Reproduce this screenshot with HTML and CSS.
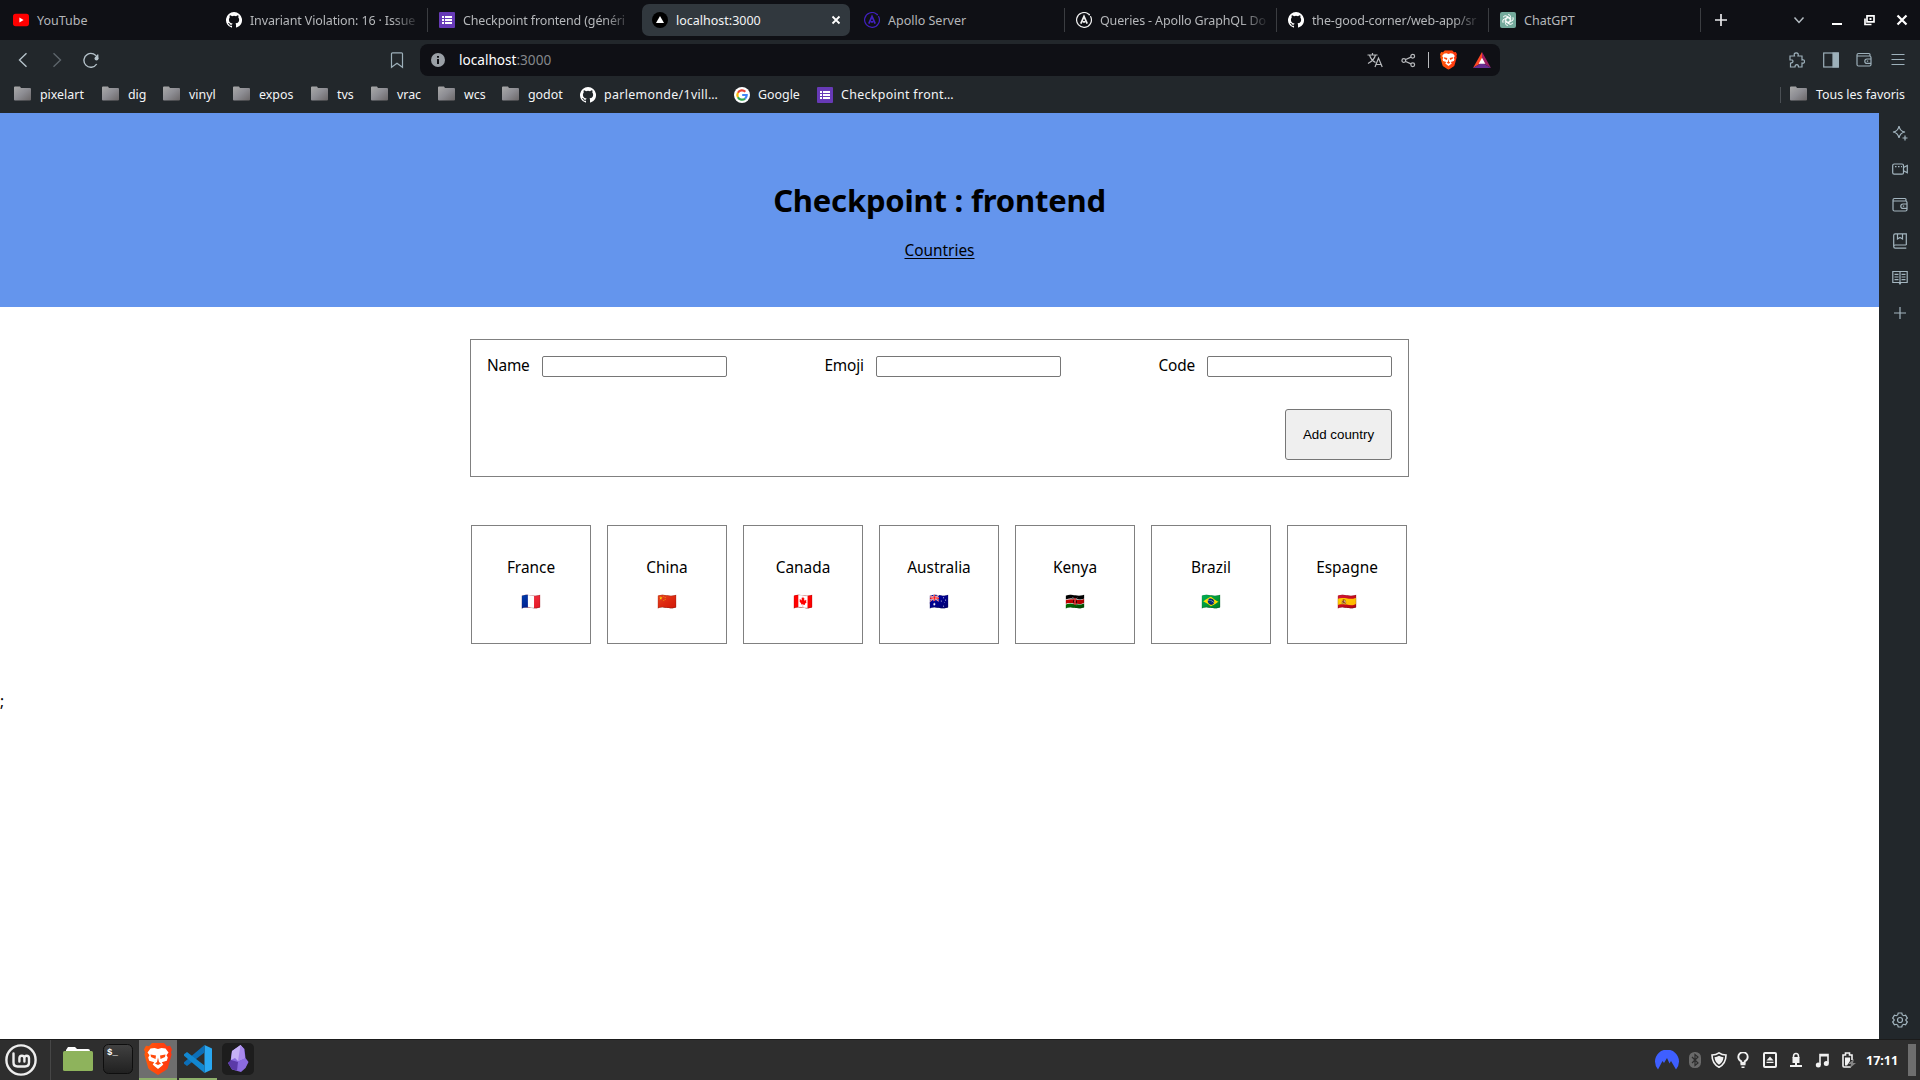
FILE: index.html
```html
<!DOCTYPE html>
<html lang="fr">
<head>
<meta charset="utf-8">
<title>localhost:3000</title>
<link rel="stylesheet" href="styles.css">
</head>
<body>
<svg class="defs" width="0" height="0">
  <symbol id="github" viewBox="0 0 16 16"><path fill="#fff" d="M8 0a8 8 0 0 0-2.53 15.59c.4.07.55-.17.55-.38v-1.49c-2.01.37-2.53-.49-2.69-.94-.09-.23-.48-.94-.82-1.13-.28-.15-.68-.52-.01-.53.63-.01 1.08.58 1.23.82.72 1.21 1.87.87 2.33.66.07-.52.28-.87.51-1.07-1.78-.2-3.64-.89-3.64-3.95 0-.87.31-1.59.82-2.15-.08-.2-.36-1.02.08-2.12 0 0 .67-.21 2.2.82a7.4 7.4 0 0 1 4 0c1.53-1.04 2.2-.82 2.2-.82.44 1.1.16 1.92.08 2.12.51.56.82 1.27.82 2.15 0 3.07-1.87 3.75-3.65 3.95.29.25.54.73.54 1.48v2.2c0 .21.15.46.55.38A8 8 0 0 0 8 0z"/></symbol>
  <symbol id="forms" viewBox="0 0 16 16"><rect width="16" height="16" rx="1" fill="#673ab7"/><path fill="#fff" d="M3 4h2v2H3zM6 4h7v2H6zM3 7h2v2H3zM6 7h7v2H6zM3 10h2v2H3zM6 10h7v2H6z"/></symbol>
  <symbol id="apollo" viewBox="0 0 16 16"><path fill="none" stroke="currentColor" stroke-width="1.2" stroke-linecap="round" d="M14.6 4.6A7.4 7.4 0 1 1 12.4 2"/><circle cx="13.2" cy="2.6" r=".9" fill="currentColor"/><path fill="none" stroke="currentColor" stroke-width="1.7" d="M4.8 11.7 8 4.3l3.2 7.4M6.8 9.8h2.4"/></symbol>
  <symbol id="folder" viewBox="0 0 17 15"><path fill="url(#fg)" d="M0 1.5Q0 .5 1 .5h5l1 1.5h9q1 0 1 1v10.500q0 1-1 1H1q-1 0-1-1z"/></symbol>
  <linearGradient id="fg" x1="0" y1="0" x2="1" y2="1"><stop offset="0" stop-color="#aaa"/><stop offset=".5" stop-color="#8d8d93"/><stop offset="1" stop-color="#6b6768"/></linearGradient>
  <linearGradient id="bg" x1="0" x2="1"><stop offset="0" stop-color="#ff5a0a"/><stop offset="1" stop-color="#ff3410"/></linearGradient>
  <symbol id="brave" viewBox="0 0 28 32"><path fill="url(#bg)" d="M8 0h12l3 3.300 3-.5 2 3.700-1 2.800.6 2.200-3.800 13.600Q23 27 14 32 5 27 4.200 25.100L.4 11.500 1 9.300 0 6.500l2-3.700 3 .5z"/><path fill="#fff" d="m14 6 3.500-1 4 .6 3 4-2 2.600 1.300 2.400-1 3.200-5 1.500 1.500 2.300-1.600 1.400L14 26l-3.700-3-1.600-1.400 1.500-2.300-5-1.500-1-3.200 1.300-2.400-2-2.600 3-4 4-.6z"/><path fill="#ff4a0d" d="m6.500 11.500 5.500 1-.5 3.500-4.500-2zM21.500 11.500l-5.500 1 .5 3.500 4.500-2zM14 14.500l1 4.500 2 1.500-3 1.500-3-1.500L13 19z"/></symbol>
  <symbol id="wallet" viewBox="0 0 16 16"><g fill="none" stroke="currentColor" stroke-width="1.2"><path d="M1 4.500V3q0-1.500 1.500-1.500H13q1 0 1 1v2M1 4h12.500q1.500 0 1.500 1.500v7q0 1.500-1.500 1.500h-11Q1 14 1 12.500V4"/><path d="M15 7h-4a2.200 2.200 0 0 0 0 4.400h4M10.800 9.200h1.400"/></g></symbol>
</svg>

<div class="desktop">
  <div class="tabs">
    <div class="tab"><svg class="i16" viewBox="0 0 16 16"><rect y="1.800" width="16" height="12.400" rx="2.600" fill="#f00"/><path d="m6.400 5.600 4.200 2.400-4.200 2.400z" fill="#fff"/></svg><span>YouTube</span></div>
    <div class="tab"><svg class="i16"><use href="#github"/></svg><span class="fade">Invariant Violation: 16 · Issue</span></div>
    <div class="tab sep"><svg class="i16"><use href="#forms"/></svg><span class="fade">Checkpoint frontend (généri</span></div>
    <div class="tab active"><svg class="i16" viewBox="0 0 16 16"><circle cx="8" cy="8" r="8" fill="#000"/><path d="m8 4 4 7H4z" fill="#fff"/></svg><span>localhost:3000</span><svg class="close" viewBox="0 0 10 10"><path d="m1.500 1.500 7 7m0-7-7 7" stroke="#fff" stroke-width="1.800"/></svg></div>
    <div class="tab violet"><svg class="i16"><use href="#apollo"/></svg><span>Apollo Server</span></div>
    <div class="tab sep light"><svg class="i16"><use href="#apollo"/></svg><span class="fade">Queries - Apollo GraphQL Do</span></div>
    <div class="tab sep"><svg class="i16"><use href="#github"/></svg><span class="fade">the-good-corner/web-app/sr</span></div>
    <div class="tab sep"><svg class="i16" viewBox="0 0 16 16"><rect width="16" height="16" rx="2" fill="#74aa9c"/><g fill="none" stroke="#fff" stroke-width=".9"><path id="petal" d="M8 2.500a2.700 2.700 0 0 1 2.700 2.700v3.600L8 10.300"/><use href="#petal" transform="rotate(60 8 8)"/><use href="#petal" transform="rotate(120 8 8)"/><use href="#petal" transform="rotate(180 8 8)"/><use href="#petal" transform="rotate(240 8 8)"/><use href="#petal" transform="rotate(300 8 8)"/></g></svg><span>ChatGPT</span></div>
    <div class="newtab sep"><svg width="12" height="12" viewBox="0 0 12 12"><path d="M6 0v12M0 6h12" stroke="#e8e8ea" stroke-width="1.700"/></svg></div>
    <div class="window">
      <svg viewBox="0 0 12 12"><path d="m1.500 3.500 4.500 5 4.500-5" fill="none" stroke="#b4bcc2" stroke-width="1.500"/></svg>
      <svg viewBox="0 0 12 12"><path d="M1 10h10" stroke="#fff" stroke-width="2"/></svg>
      <svg viewBox="0 0 12 12"><path d="M4 1.800h7v6H4zM2 4.500v6h6.500" fill="none" stroke="#fff" stroke-width="1.700"/><path d="M6.500 4h2v2h-2z" fill="#fff"/></svg>
      <svg viewBox="0 0 12 12"><path d="m1.500 1.500 9 9m0-9-9 9" stroke="#fff" stroke-width="2.200"/></svg>
    </div>
  </div>

  <div class="toolbar">
    <div class="nav">
      <svg viewBox="0 0 16 16"><path d="M11.500 1.200 4.500 8l7 6.800"/></svg>
      <svg class="dim" viewBox="0 0 16 16"><path d="m4.500 1.200 7 6.800-7 6.800"/></svg>
      <svg viewBox="0 0 16 16"><path d="M14.500 6.500A6.900 6.900 0 1 0 13.700 12M14.700 2.500v4.200"/><circle cx="13.500" cy="6.500" r="2" class="dot"/></svg>
    </div>
    <svg class="mark" viewBox="0 0 16 16"><path d="M3.500.8h9q1 0 1 1v13.400L8 11.200l-5.500 4V1.800q0-1 1-1z"/></svg>
    <div class="url">
      <svg class="info" viewBox="0 0 14 14"><circle cx="7" cy="7" r="7" fill="#9aa0a6"/><path d="M6 3h2v1.700H6zM6 6h2v5H6z" fill="#0f1015"/></svg>
      <span class="address">localhost<i>:3000</i></span>
      <svg class="i16" viewBox="0 0 16 16"><path fill="none" stroke="#b9bbbe" stroke-width="1.200" d="M.5 3h10M5.500 1v2M2.500 3q1.500 5 6 7.500M8.500 3Q7 8.500 1 11.500M8 15l3.500-9 3.700 9M9 12.500h5"/></svg>
      <svg class="share" viewBox="0 0 16 16"><g fill="none" stroke="#b9bbbe" stroke-width="1.300"><circle cx="3" cy="8" r="2"/><circle cx="12.500" cy="3.500" r="2"/><circle cx="12.500" cy="12.500" r="2"/><path d="m5 7 5.600-2.600M5 9l5.600 2.600"/></g></svg>
      <b class="bar"></b>
      <svg class="lion" viewBox="0 0 28 32"><use href="#brave"/></svg>
      <svg class="bat" viewBox="0 0 18 16"><path d="M9 0 0 16l9-5.500z" fill="#ff4724"/><path d="m9 0 9 16-9-5.500z" fill="#9e1f63"/><path d="M0 16h18l-9-5.500z" fill="#662d91"/><path d="m9 5.800 3.300 6H5.700z" fill="#fff"/></svg>
    </div>
    <div class="tools">
      <svg viewBox="0 0 16 16"><path d="M1 4h4.500q-1-3.200 1.700-3.200T9 4h4v4q2.500-.6 2.500 1.500T13 11v4H9.500q0-2.300-1.700-2.300T6 15H1.500v-4Q4 11 4 9.300T1 7.800z"/></svg>
      <svg viewBox="0 0 16 16"><rect x=".7" y="1" width="14.600" height="14"/><path d="M10 1h5.300v14H10z" class="fill"/></svg>
      <svg viewBox="0 0 16 16"><use href="#wallet"/></svg>
      <svg viewBox="0 0 16 16"><path d="M1.500 2.500h13M1.500 7.500h13M1.500 12.500h13"/></svg>
    </div>
  </div>

  <div class="bookmarks">
    <div class="bm"><svg class="fold"><use href="#folder"/></svg>pixelart</div>
    <div class="bm"><svg class="fold"><use href="#folder"/></svg>dig</div>
    <div class="bm"><svg class="fold"><use href="#folder"/></svg>vinyl</div>
    <div class="bm"><svg class="fold"><use href="#folder"/></svg>expos</div>
    <div class="bm"><svg class="fold"><use href="#folder"/></svg>tvs</div>
    <div class="bm"><svg class="fold"><use href="#folder"/></svg>vrac</div>
    <div class="bm"><svg class="fold"><use href="#folder"/></svg>wcs</div>
    <div class="bm"><svg class="fold"><use href="#folder"/></svg>godot</div>
    <div class="bm site wide"><svg class="i16"><use href="#github"/></svg>parlemonde/1vill…</div>
    <div class="bm site"><svg class="i16" viewBox="0 0 16 16"><circle cx="8" cy="8" r="8" fill="#fff"/><g fill="none" stroke-width="2.200"><path stroke="#ea4335" d="M3.900 5.800A4.700 4.700 0 0 1 11.300 4.700"/><path stroke="#fbbc05" d="M3.900 10.200a4.700 4.700 0 0 1 0-4.400"/><path stroke="#34a853" d="M3.900 10.200a4.700 4.700 0 0 0 7.200 1.400"/><path stroke="#4285f4" d="M11.100 11.600A4.600 4.600 0 0 0 12.700 8H8.200"/></g></svg>Google</div>
    <div class="bm site wide"><svg class="i16"><use href="#forms"/></svg>Checkpoint front…</div>
    <div class="bm all"><svg class="fold"><use href="#folder"/></svg>Tous les favoris</div>
  </div>

  <div class="body">
    <main class="page">
      <header class="banner">
        <h1>Checkpoint : frontend</h1>
        <a class="link">Countries</a>
      </header>
      <form class="form">
        <div class="fields">
          <label><span>Name</span><input type="text"></label>
          <label><span>Emoji</span><input type="text"></label>
          <label><span>Code</span><input type="text"></label>
        </div>
        <button type="button" class="add">Add country</button>
      </form>
      <section class="cards">
        <div class="card"><span>France</span><span class="flag">🇫🇷</span></div>
        <div class="card"><span>China</span><span class="flag">🇨🇳</span></div>
        <div class="card"><span>Canada</span><span class="flag">🇨🇦</span></div>
        <div class="card"><span>Australia</span><span class="flag">🇦🇺</span></div>
        <div class="card"><span>Kenya</span><span class="flag">🇰🇪</span></div>
        <div class="card"><span>Brazil</span><span class="flag">🇧🇷</span></div>
        <div class="card"><span>Espagne</span><span class="flag">🇪🇸</span></div>
      </section>
      <div class="stray">;</div>
    </main>
    <aside class="side">
      <svg viewBox="0 0 16 16"><path d="M7 1q1 5.500 6 6-5 .8-6 6-1-5.200-6-6 5-.5 6-6z"/><path d="M13 10.500v5M10.500 13h5"/></svg>
      <svg viewBox="0 0 16 16"><rect x=".7" y="3" width="10.800" height="10.200" rx="1.500"/><path d="m11.500 6.500 3.800-2v7.200l-3.800-2M3 5.700h1.500M6 5.700h1.500M9 5.700h1"/></svg>
      <svg viewBox="0 0 16 16"><use href="#wallet"/></svg>
      <svg viewBox="0 0 16 16"><path d="M14.300 12V.9H3.200q-1.500 0-1.500 1.500v11q0 1.700 1.500 1.700h11.100M14.300 12H3.200q-1.500 0-1.500 1.400M5.500 1v5L8 4.500 10.500 6V1"/></svg>
      <svg viewBox="0 0 16 16"><path d="M8 2.500H.8v11H7l1 1.500 1-1.500h6.200v-11zM8 2.500V15M2.500 5.300h4M2.500 8h4M2.500 10.700h4M9.500 5.300h4M9.500 8h4M9.500 10.700h4"/></svg>
      <svg viewBox="0 0 16 16"><path d="M8 2v12M2 8h12"/></svg>
      <svg class="gear" viewBox="0 0 16 16"><path d="m6.200 1 3.600 0 .5 1.900 1.400.8 1.900-.6 1.700 3-1.400 1.400v1l1.400 1.400-1.700 3-1.900-.6-1.400.8-.5 1.900H6.200l-.5-1.900-1.400-.8-1.900.6-1.700-3 1.400-1.400v-1L.7 6.100l1.700-3 1.900.6 1.400-.8z"/><circle cx="8" cy="8" r="2.500"/></svg>
    </aside>
  </div>

  <footer class="taskbar">
    <div class="start"><svg width="32" height="32" viewBox="0 0 32 32"><g fill="none" stroke="#eee" stroke-width="2.400"><circle cx="16" cy="16" r="14.600"/><path stroke-linecap="round" d="M8.500 9.500v9q0 4 4 4h7.500q4 0 4-4v-4.200q0-2.600-2.300-2.600t-2.300 2.600v3.200M19.400 14.300q0-2.600-2.500-2.600t-2.500 2.600v3.200"/></g></svg></div>
    <div class="app"><svg width="30" height="26" viewBox="0 0 30 26"><path d="M3 6V4l2-3h7l2 2h11q2 0 2 2v2z" fill="#fff"/><rect y="5" width="30" height="20" rx="1.500" fill="#8eb35c"/></svg></div>
    <div class="app"><svg width="30" height="30" viewBox="0 0 30 30"><defs><linearGradient id="tg" x2="0" y2="1"><stop stop-color="#414141"/><stop offset="1" stop-color="#202020"/></linearGradient></defs><rect x=".5" y=".5" width="29" height="29" rx="5" fill="url(#tg)" stroke="#0e0e0e"/><text x="4" y="10.500" class="prompt">$_</text></svg></div>
    <div class="app open lit"><svg width="28" height="32" viewBox="0 0 28 32"><use href="#brave"/></svg></div>
    <div class="app open"><svg width="28" height="28" viewBox="0 0 28 28"><path d="M20.500 0 28 3.500v21L20.500 28z" fill="#29a8f2"/><path d="M20.500 0v7.500L3 21 0 18.800v-1.500z" fill="#0c6fb8"/><path d="M20.500 28v-7.500L3 7 0 9.200v1.500z" fill="#1287d0"/></svg></div>
    <div class="app"><svg width="32" height="32" viewBox="0 0 32 32"><rect width="32" height="32" rx="5" fill="#1d1d1d"/><path d="M18.500 2 10 8 8.500 18 6 20l4 6.500 9 2.500 4.500-4 3-6-3-4-1-9z" fill="#8b6be0"/><path d="M18.500 2 10 8 9 17l4-2 3 3 6.500-3-1-9z" fill="#c7b2f7"/><path d="M18.500 2 16 18l7-3-1.300-9z" fill="#a889ec"/><path d="m6 20 3-3 7 2-1 8.500-5-1z" fill="#5b3aa8"/></svg></div>
    <div class="tray">
      <svg viewBox="0 0 24 20"><path d="M3 19.500A12 12 0 1 1 21 19.500L16 11l-1.500 2.500L12 8l-3 5-1.500-2z" fill="#3e5fff"/></svg>
      <svg viewBox="0 0 12 16"><rect width="12" height="16" rx="5.500" fill="#6a6a6a"/><path d="m3 5 6 6-3 2.500v-11L9 5l-6 6" fill="none" stroke="#2d2d2d" stroke-width="1.200"/></svg>
      <svg viewBox="0 0 16 16"><path d="M8 .8Q11 3 15 3q0 8.500-7 12.300Q1 11.500 1 3q4 0 7-2.200z" fill="none" stroke="#f2f2f2" stroke-width="1.600"/><path d="M8 3.700q2 1.200 4.500 1.500-.5 5-4.500 7.500-4-2.500-4.500-7.500Q6 4.900 8 3.700z" fill="#f2f2f2"/></svg>
      <svg viewBox="0 0 12 16"><path d="M4.300 11V9.300q-3-1.500-3-4.300a4.700 4.700 0 0 1 9.400 0q0 2.800-3 4.300V11z" fill="none" stroke="#f2f2f2" stroke-width="1.900"/><path d="M3.500 12h5v1.200h-5zM4.500 14.500h3v1.500h-3z" fill="#f2f2f2"/></svg>
      <svg viewBox="0 0 14 16"><rect x="1" y="1" width="12" height="14" rx="1" fill="none" stroke="#f2f2f2" stroke-width="2"/><path d="m7 4.500 3.500 4h-7zM3.500 9.700h7v1.300h-7z" fill="#f2f2f2"/></svg>
      <svg viewBox="0 0 12 16"><path d="M3.500 6V4.500Q3.500 1.500 6 1.500t2.500 3V6" fill="none" stroke="#f2f2f2" stroke-width="1.500"/><path d="M2.500 5h7v6h-7zM5 11h2v2h5v2H0v-2h5z" fill="#f2f2f2"/></svg>
      <svg viewBox="0 0 14 16"><path d="M5 13V2.500h8V11" fill="none" stroke="#f2f2f2" stroke-width="1.600"/><path d="M5 2h8v2.500H5z" fill="#f2f2f2"/><circle cx="3.300" cy="13" r="2.500" fill="#f2f2f2"/><circle cx="11.300" cy="11.500" r="2.500" fill="#f2f2f2"/></svg>
      <svg viewBox="0 0 14 16"><path d="M9 15H2q-1 0-1-1V3h2.500V1h4v2H10v5" fill="none" stroke="#f2f2f2" stroke-width="1.600"/><path d="M3 10V5.500h5V9l-3 4.500H3z" fill="#f2f2f2"/><path d="m12 7-6 5h3l-1 4 6-5h-3z" fill="#858585"/></svg>
      <span class="clock">17:11</span>
      <b class="corner"></b>
    </div>
  </footer>
</div>
</body>
</html>
```
FILE: styles.css
```css
* { box-sizing: border-box; }
body { margin: 0; font-family: "Noto Sans", "Noto Color Emoji", sans-serif; color: #000; background: #fff; }
svg { display: block; flex: none; }
.defs { position: absolute; }
.i16 { width: 16px; height: 16px; }
.desktop { width: 1920px; height: 1080px; display: flex; flex-direction: column; overflow: hidden; }

.tabs { height: 40px; padding-left: 1px; background: #0f1015; display: grid; grid-template-columns: repeat(3, 213px) repeat(5, 212px) 80px 1fr; align-items: center; font-size: 12.500px; color: #b5b7ba; }
.tab { height: 32px; padding: 0 8px 0 12px; display: flex; align-items: center; gap: 8px; min-width: 0; }
.tab span { flex: 1; min-width: 0; white-space: nowrap; line-height: 20px; padding-top: 1px; }
.tab .fade { letter-spacing: -.14px; mask-image: linear-gradient(90deg, #000 84%, transparent 101%); }
.sep { background: linear-gradient(#3b3d41, #3b3d41) 0 50% / 1px 24px no-repeat; }
.active { background: #31383e; color: #f3f4f5; border-radius: 7px; margin: 0 2px; padding: 0 9px 0 10px; }
.close { width: 10px; height: 10px; }
.violet svg { color: #4121bd; }
.light svg { color: #f0f0f0; }
.newtab { height: 32px; padding-left: 15px; display: flex; align-items: center; }
.window { display: grid; grid-template-columns: 38px 32px 33px 12px; padding-left: 13px; }
.window svg { width: 12px; height: 12px; }

.toolbar { height: 40px; background: #22272b; display: flex; align-items: center; color: #9db0ba; }
.toolbar svg, .side svg { fill: none; stroke: currentColor; stroke-width: 1.200; }
.nav { width: 389px; padding-left: 15px; display: flex; gap: 18px; }
.nav svg, .mark { width: 16px; height: 18px; }
.nav svg { stroke: #b5c2ca; stroke-width: 1.400; }
.nav .dim { stroke: #5d656b; }
.nav .dot { fill: #b5c2ca; stroke: none; }
.url { width: 1080px; height: 32px; margin-left: 15px; background: #0f1015; border-radius: 8px; padding: 0 9px 0 11px; display: flex; align-items: center; }
.toolbar .url svg { stroke: none; }
.url .info { width: 14px; height: 14px; }
.address { flex: 1; margin-left: 14px; font-size: 13.600px; line-height: 20px; color: #fff; }
.address i { font-style: normal; color: #85888c; }
.url .share { width: 15px; height: 15px; margin-left: 18px; }
.bar { width: 1px; height: 16px; background: #b9bbbe; margin: 0 11px 0 12px; }
.url .lion { width: 17px; height: 20px; margin-right: 16px; }
.url .bat { width: 18px; height: 16px; }
.tools { display: flex; gap: 17.600px; margin-left: 289px; }
.tools svg { width: 16px; height: 16px; }
.tools .fill { fill: #9db0ba; }

.bookmarks { height: 33px; background: #22272b; padding: 0 14px 4px; display: grid; grid-template-columns: 88px 61px 70px 78px 60px 67px 64px 78px 154px 83px 1fr 140px; align-items: center; font-size: 12.400px; color: #f4f5f6; }
.bm { display: flex; align-items: center; gap: 9px; white-space: nowrap; line-height: 20px; }
.bm.site { gap: 8px; }
.bm.wide { letter-spacing: .33px; }
.fold { width: 17px; height: 15px; margin-bottom: 2px; }
.all { height: 16px; border-left: 1px solid #4a4f54; padding-left: 9px; margin-left: 14px; }

.body { flex: 1; min-height: 0; display: flex; }
.page { width: 1879px; background: #fff; font-size: 15.400px; line-height: 20px; display: flex; flex-direction: column; align-items: center; }
.banner { width: 100%; height: 194px; background: #6495ed; padding-top: 67px; display: flex; flex-direction: column; align-items: center; gap: 19px; }
.banner h1 { margin: 0; font-size: 31px; line-height: 40px; letter-spacing: -.2px; }
.link { line-height: 24px; text-decoration: underline; text-decoration-thickness: 1px; text-underline-offset: 2px; }
.form { width: 939px; height: 138px; margin-top: 32px; border: 1px solid #808080; padding: 16px; display: flex; flex-direction: column; justify-content: space-between; }
.fields { display: flex; justify-content: space-between; }
.fields label { display: flex; align-items: center; gap: 12px; height: 21px; }
.fields span { padding-bottom: 2px; letter-spacing: -.2px; }
.fields input { width: 185px; height: 21px; border: 1px solid #767676; border-radius: 2px; background: #fff; }
.add { align-self: flex-end; width: 107px; height: 51px; padding: 0; border: 1px solid #767676; border-radius: 3px; background: #efefef; color: #000; font: 13.333px "Liberation Sans", sans-serif; }
.cards { margin: 48px 1px 0 0; display: flex; gap: 16px; }
.card { width: 120px; height: 119px; border: 1px solid #808080; padding-top: 32px; display: flex; flex-direction: column; align-items: center; gap: 13px; }
.flag { font-size: 16px; padding-left: 1px; }
.stray { align-self: flex-start; margin-top: 48px; }
.side { flex: 1; background: #22272b; color: #a3b5bf; padding: 12px 0 11px; display: flex; flex-direction: column; align-items: center; gap: 20px; }
.side svg { width: 16px; height: 16px; }
.gear { margin-top: auto; }

.taskbar { height: 41px; background: #2e2e2e; border-top: 1px solid #1b1b1b; display: flex; }
.start { width: 51px; padding-left: 5px; display: flex; align-items: center; border-right: 1px solid #464646; margin-right: 8px; }
.app { width: 38px; height: 40px; margin-right: 2px; display: flex; align-items: center; justify-content: center; border-bottom: 2px solid transparent; }
.app.open { border-bottom-color: #8eb06b; }
.lit { background-color: #6e6e6e; }
.prompt { font: bold 9px "Liberation Mono", monospace; fill: #fff; }
.tray { margin-left: auto; padding-right: 4px; display: grid; grid-template-columns: 34px 22px 26px 26px 27px 25px 27px 24px 42px 8px; align-items: center; }
.tray svg { height: 16px; width: auto; }
.tray svg:first-child { height: 20px; }
.clock { font-size: 12.500px; font-weight: 700; color: #fff; }
.corner { height: 32px; background: #6e6e6e; }
```
